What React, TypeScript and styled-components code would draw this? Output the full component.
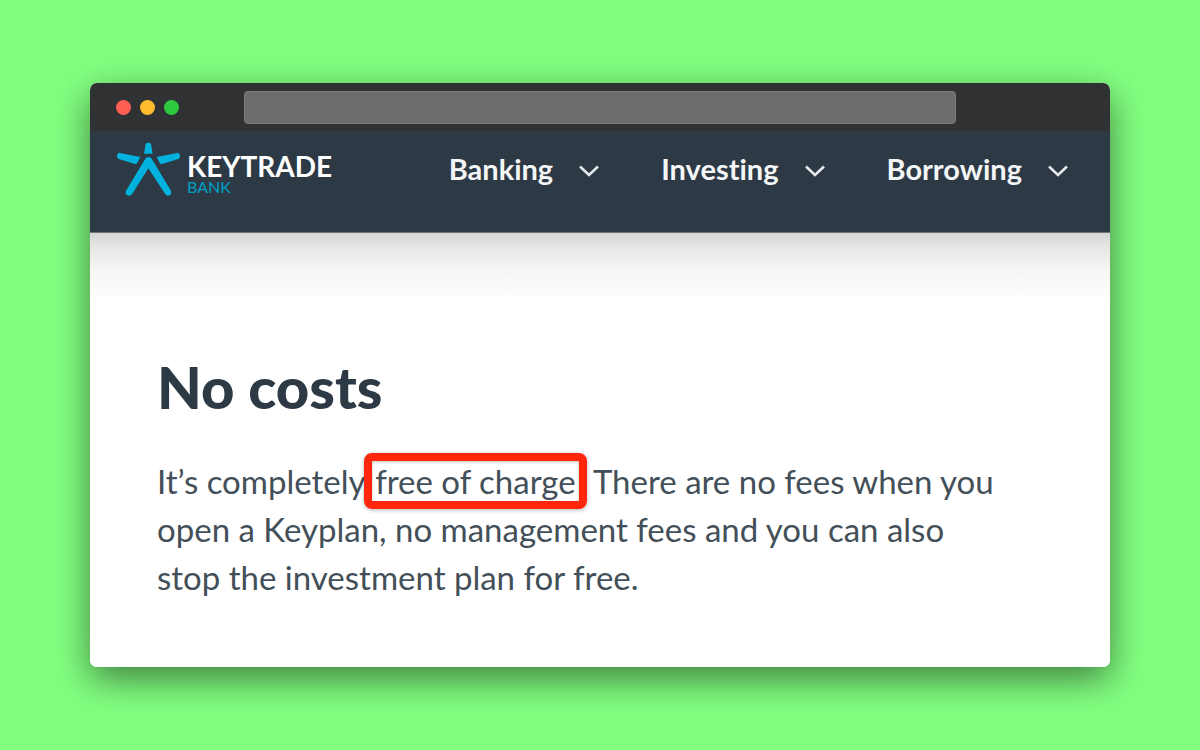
import React from "react";
import styled, { createGlobalStyle } from "styled-components";

const GlobalStyle = createGlobalStyle`
  * { box-sizing: border-box; }
  body {
    margin: 0;
    background: #82ff80;
    font-family: Lato, "Open Sans", sans-serif;
    font-variant-ligatures: none;
  }
`;

const Page = styled.main`
  padding: 83px 90px;
`;

const BrowserWindow = styled.section`
  border-radius: 7px;
  overflow: hidden;
  background: #ffffff;
  box-shadow: 0 12px 36px rgba(0, 0, 0, 0.5);
`;

const TitleBar = styled.div`
  display: flex;
  align-items: center;
  height: 48px;
  padding: 0 26px;
  background: #303133;
`;

const Lights = styled.div`
  display: flex;
  gap: 9px;
`;

const Light = styled.span<{ $color: string }>`
  width: 15px;
  height: 15px;
  border-radius: 50%;
  background: ${(p) => p.$color};
`;

const AddressBar = styled.input`
  flex: 1;
  height: 33px;
  margin: 0 128px 0 65px;
  padding: 0 12px;
  border: 1px solid #7c7c7c;
  border-radius: 4px;
  background: #6d6d6d;
  color: #ffffff;
  font: inherit;
`;

const SiteHeader = styled.header`
  display: flex;
  align-items: flex-start;
  justify-content: space-between;
  height: 102px;
  padding: 10px 42px 0 25px;
  border-bottom: 1px solid #6b747b;
  background: #2d3a46;
`;

const Logo = styled.a`
  display: flex;
  gap: 5px;
  text-decoration: none;
`;

const LogoMark = styled.svg`
  width: 67px;
  height: 56px;
`;

const LogoText = styled.span`
  display: flex;
  flex-direction: column;
  padding-top: 12px;
`;

const LogoName = styled.span`
  color: #ffffff;
  font-size: 28px;
  font-weight: 700;
  line-height: 26px;
`;

const LogoSub = styled.span`
  color: #00a0c4;
  font-size: 16px;
  font-weight: 400;
  line-height: 16px;
`;

const Nav = styled.nav`
  display: flex;
  gap: 62px;
  padding-top: 10px;
`;

const NavButton = styled.button`
  display: flex;
  align-items: center;
  gap: 26px;
  padding: 0;
  border: 0;
  background: none;
  color: #f4f6f7;
  font: inherit;
  font-variant-ligatures: inherit;
  font-size: 29px;
  font-weight: 700;
  line-height: 36px;
`;

const Chevron = styled.svg`
  width: 20px;
  height: 12px;
  margin-top: 4px;
`;

const Content = styled.article`
  padding: 120px 67px 66px;
  background: linear-gradient(#d6d6d6, #e6e6e6 14px, #f5f5f5 36px, #ffffff 68px);
  color: #2d3a46;
`;

const Title = styled.h1`
  margin: 0;
  font-size: 58px;
  font-weight: 900;
  line-height: 68px;
`;

const Copy = styled.p`
  margin: 36px 0 0;
  color: #434f59;
  font-size: 33px;
  line-height: 48px;
  white-space: nowrap;
`;

const Highlight = styled.mark`
  position: relative;
  padding: 0 2px;
  background: none;
  color: inherit;

  &::after {
    content: "";
    position: absolute;
    inset: -8px -9px;
    border: 8px solid #ff260d;
    border-radius: 8px;
    box-shadow: 0 1px 4px rgba(0, 0, 0, 0.3), inset 0 1px 3px rgba(0, 0, 0, 0.25);
  }
`;

const lights = ["#ff5f52", "#ffbd2e", "#2dca41"];
const sections = ["Banking", "Investing", "Borrowing"];

export default function App() {
  return (
    <>
      <GlobalStyle />
      <Page>
        <BrowserWindow>
          <TitleBar>
            <Lights>
              {lights.map((color) => (
                <Light key={color} $color={color} />
              ))}
            </Lights>
            <AddressBar type="text" aria-label="Address" />
          </TitleBar>
          <SiteHeader>
            <Logo href="#">
              <LogoMark viewBox="104 212 201 168" fill="#00b2dd" aria-hidden="true">
                <path d="M196 221Q204 212 212 221L217 250H191Z" />
                <path d="M115 247Q106 255 113 265L164 281Q169 282 171 277L180 260Z" />
                <path d="M294 247Q303 255 296 265L245 281Q240 282 238 277L229 260Z" />
                <path d="M196 264Q204 256 213 264L272 361Q275 370 268 375Q260 378 255 372L204 294L155 372Q149 378 141 375Q133 370 137 361Z" />
              </LogoMark>
              <LogoText>
                <LogoName>KEYTRADE</LogoName>
                <LogoSub>BANK</LogoSub>
              </LogoText>
            </Logo>
            <Nav>
              {sections.map((name) => (
                <NavButton key={name} type="button">
                  {name}
                  <Chevron viewBox="0 0 20 12" fill="none" stroke="#e4e8ea" strokeWidth="2.6" aria-hidden="true">
                    <path d="M1 1.5L10 10L19 1.5" />
                  </Chevron>
                </NavButton>
              ))}
            </Nav>
          </SiteHeader>
          <Content>
            <Title>No costs</Title>
            <Copy>
              It’s completely <Highlight>free of charge</Highlight>. There are no fees when you
              <br />
              open a Keyplan, no management fees and you can also
              <br />
              stop the investment plan for free.
            </Copy>
          </Content>
        </BrowserWindow>
      </Page>
    </>
  );
}
